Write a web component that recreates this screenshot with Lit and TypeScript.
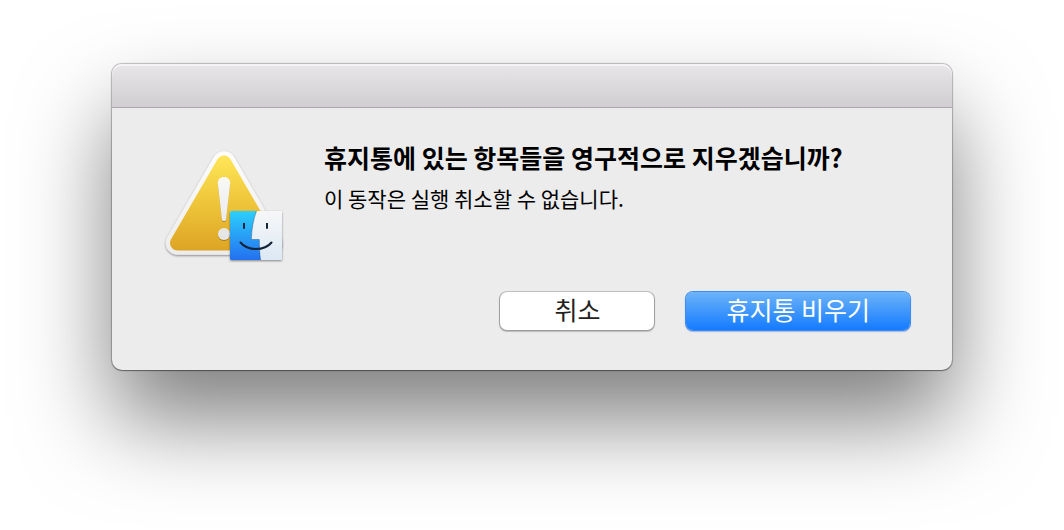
import { LitElement, html, css } from "lit";
import { customElement } from "lit/decorators.js";

@customElement("alert-icon")
class AlertIcon extends LitElement {
  static styles = css`
    :host {
      display: block;
      flex: none;
    }
    .icon {
      display: block;
      width: 128px;
      height: 128px;
    }
  `;

  render() {
    return html`
      <svg class="icon" viewBox="160 144 128 128" role="img" aria-label="Finder">
        <defs>
          <linearGradient id="amber" gradientUnits="userSpaceOnUse" x1="0" y1="156" x2="0" y2="251">
            <stop offset="0" stop-color="#ffe658" />
            <stop offset="0.45" stop-color="#f0c83c" />
            <stop offset="1" stop-color="#dda424" />
          </linearGradient>
          <linearGradient id="rim" gradientUnits="userSpaceOnUse" x1="0" y1="151" x2="0" y2="255">
            <stop offset="0" stop-color="#fdfdfd" />
            <stop offset="1" stop-color="#ececec" />
          </linearGradient>
          <linearGradient id="mark" gradientUnits="userSpaceOnUse" x1="0" y1="177" x2="0" y2="240">
            <stop offset="0" stop-color="#f9f9f9" />
            <stop offset="1" stop-color="#e4e4e4" />
          </linearGradient>
          <linearGradient id="blue" x1="0" y1="0" x2="0" y2="1">
            <stop offset="0" stop-color="#2cd0fb" />
            <stop offset="1" stop-color="#2470f0" />
          </linearGradient>
          <linearGradient id="pale" x1="0" y1="0" x2="0" y2="1">
            <stop offset="0" stop-color="#f7f7f8" />
            <stop offset="1" stop-color="#dbe8f4" />
          </linearGradient>
          <clipPath id="tile"><rect x="230" y="211" width="52" height="49" rx="1.5" /></clipPath>
          <filter id="drop" x="-20%" y="-20%" width="140%" height="140%">
            <feDropShadow dx="0" dy="1" stdDeviation="1" flood-color="#000" flood-opacity="0.45" />
          </filter>
          <filter id="soft" x="-50%" y="-20%" width="200%" height="140%">
            <feDropShadow dx="0" dy="1" stdDeviation="0.6" flood-color="#7a5500" flood-opacity="0.55" />
          </filter>
        </defs>
        <path d="M224 163 270.500 243H177.500Z" fill="url(#rim)" stroke="url(#rim)" stroke-width="23.500" stroke-linejoin="round" filter="url(#drop)" />
        <path d="M224 163 270.500 243H177.500Z" fill="url(#amber)" stroke="url(#amber)" stroke-width="15" stroke-linejoin="round" />
        <g fill="url(#mark)" filter="url(#soft)">
          <path d="M224 177c3.8 0 6.3 2.600 6.200 6.300L226.100 219c-.2 2.700-4 2.700-4.200 0L217.800 183.300C217.700 179.600 220.200 177 224 177Z" />
          <circle cx="224" cy="234" r="6" />
        </g>
        <rect x="230" y="211" width="52" height="49" rx="1.5" fill="#dbe8f4" filter="url(#drop)" />
        <g clip-path="url(#tile)">
          <rect x="230" y="211" width="40" height="49" fill="url(#blue)" />
          <path d="M256.500 211C253.300 219.500 251.700 229 251.300 239.500H259.300C259.300 247 259.700 254 260.700 261H283V211Z" fill="url(#pale)" />
          <path d="M256.500 211C253.300 219.500 251.700 229 251.300 239.500H259.300C259.300 247 259.700 254 260.700 261" fill="none" stroke="#123c6b" stroke-opacity="0.55" stroke-width="0.7" />
        </g>
        <g stroke="#14253a" stroke-width="2" fill="none">
          <path d="M244 223V228.700M267 223V228.700" />
          <path d="M240.500 242.500C247.500 251.200 264.500 251.200 271.500 242.500" stroke-linecap="round" />
        </g>
      </svg>
    `;
  }
}

@customElement("app-root")
class AppRoot extends LitElement {
  static styles = css`
    :host {
      display: block;
      box-sizing: border-box;
      min-height: 100vh;
      padding: 64px 112px 160px;
      overflow: hidden;
      background: #fff;
      color: #000;
      font-family: "Noto Sans CJK KR", "Liberation Sans", sans-serif;
    }
    .dialog {
      border-radius: 10px;
      background: #ececec;
      box-shadow:
        0 0 1px 1px rgba(0, 0, 0, 0.24),
        0 1px 1px rgba(0, 0, 0, 0.3),
        0 50px 90px rgba(0, 0, 0, 0.5);
    }
    .titlebar {
      box-sizing: border-box;
      height: 44px;
      border-bottom: 1px solid #aaa8aa;
      border-radius: 10px 10px 0 0;
      background: linear-gradient(#e8e6e9, #d0ced1);
      box-shadow: inset 0 2px 0 #f5f4f5;
    }
    .content {
      display: flex;
      gap: 36px;
      padding: 36px 42px 0 48px;
    }
    .message {
      flex: 1;
      min-width: 0;
    }
    .title {
      margin: 0;
      padding-bottom: 12px;
      font-size: 25px;
      line-height: 26px;
      font-weight: 700;
    }
    .detail {
      margin: 0;
      font-size: 21px;
      line-height: 32px;
    }
    .actions {
      display: flex;
      justify-content: flex-end;
      gap: 32px;
      padding: 20px 42px 40px;
    }
    .button {
      height: 38px;
      min-width: 154px;
      padding: 0 40px 4px;
      border: 0;
      border-radius: 7px;
      background: #fff;
      box-shadow:
        0 0 0 1px rgba(0, 0, 0, 0.17),
        0 1px 1px 1px rgba(0, 0, 0, 0.2);
      color: #222;
      font-family: inherit;
      font-size: 25px;
      line-height: 34px;
    }
    .primary {
      background: linear-gradient(#6db3f8, #147bff);
      box-shadow:
        0 0 0 1px #3b8df5,
        0 1px 1px 1px rgba(0, 60, 180, 0.3);
      color: #fff;
    }
  `;

  render() {
    return html`
      <section class="dialog" role="alertdialog" aria-labelledby="title" aria-describedby="detail">
        <header class="titlebar"></header>
        <div class="content">
          <alert-icon></alert-icon>
          <div class="message">
            <h1 class="title" id="title">휴지통에 있는 항목들을 영구적으로 지우겠습니까?</h1>
            <p class="detail" id="detail">이 동작은 실행 취소할 수 없습니다.</p>
          </div>
        </div>
        <footer class="actions">
          <button class="button" type="button">취소</button>
          <button class="button primary" type="button">휴지통 비우기</button>
        </footer>
      </section>
    `;
  }
}
